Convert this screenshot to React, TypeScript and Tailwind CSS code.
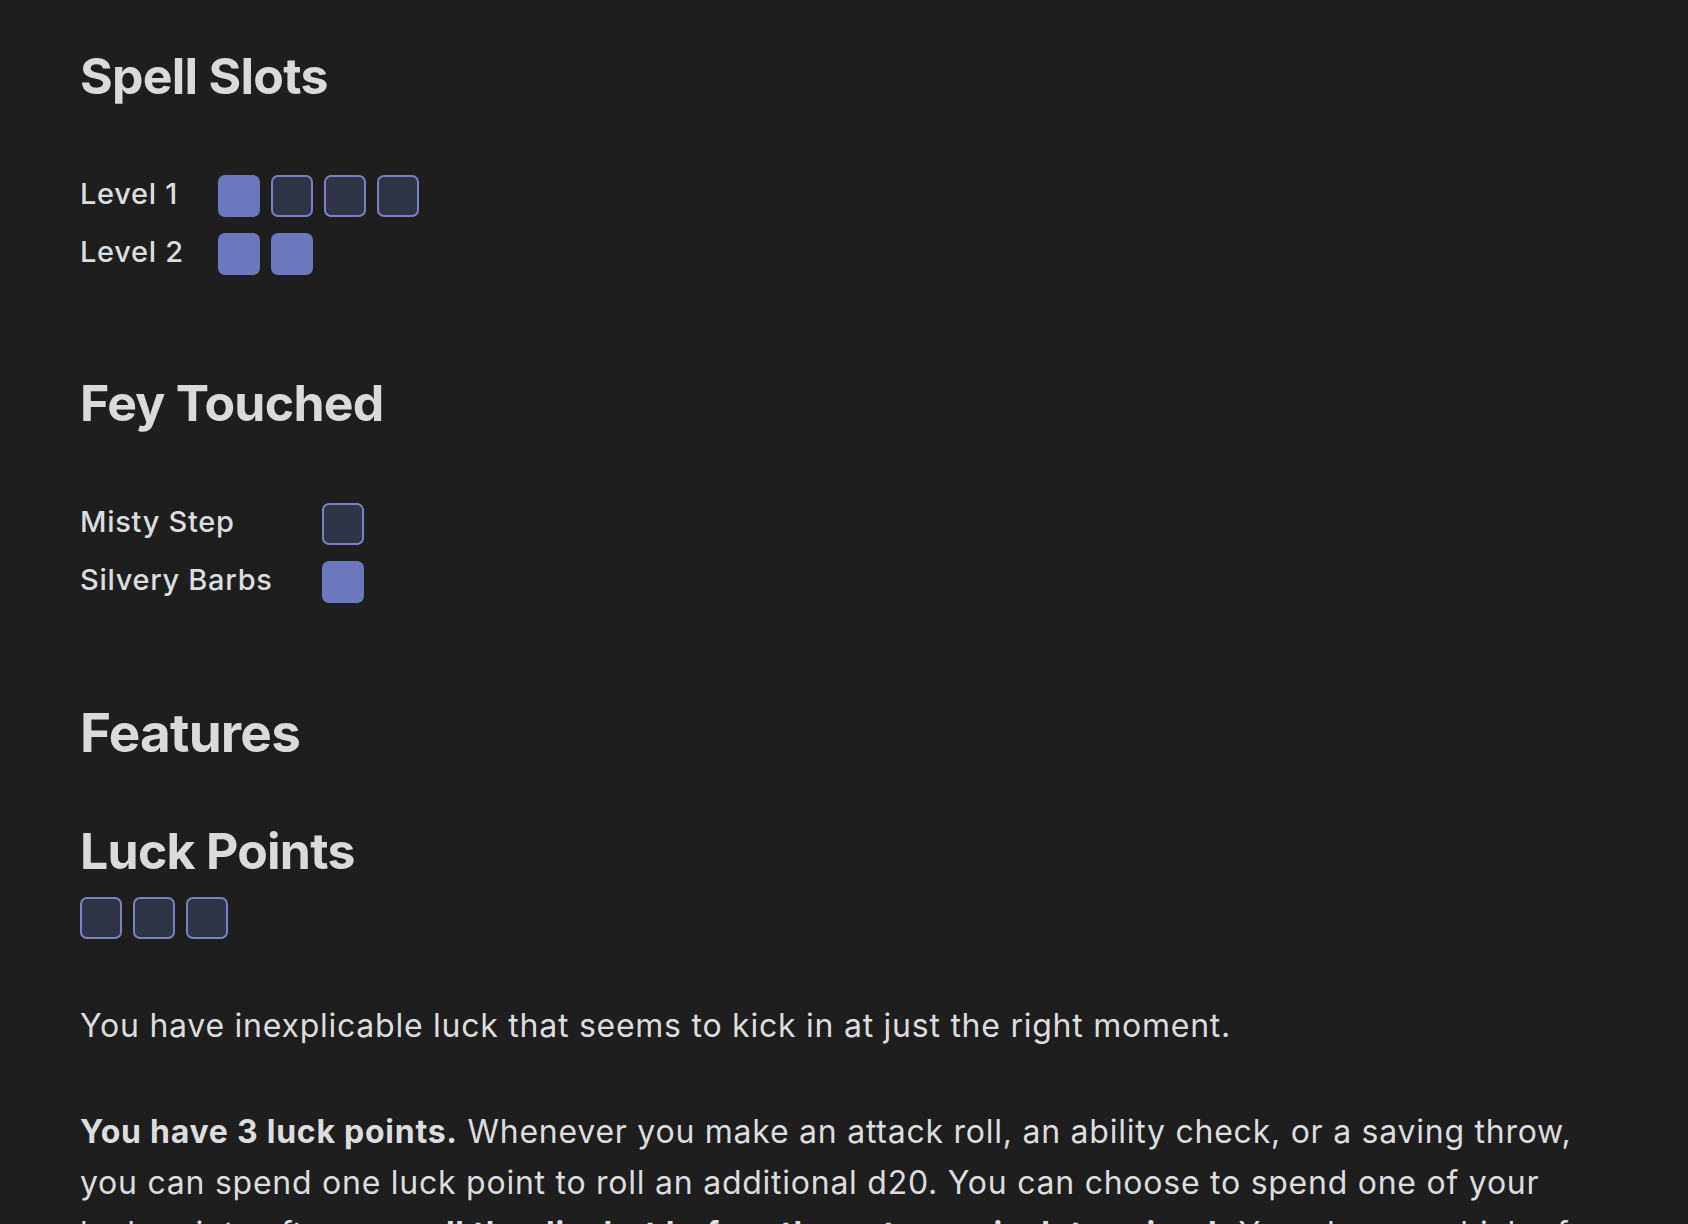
import React from 'react';

const font = { fontFamily: 'Inter, "Noto Sans", sans-serif' };

function Slot({ used }: { used: boolean }) {
  return used ? (
    <span className="block w-[42px] h-[42px] rounded-[7px] bg-[#6c78bd] border-2 border-[#6c78bd]" />
  ) : (
    <span className="block w-[42px] h-[42px] rounded-[7px] bg-[#2e3445] border-2 border-[#7a81c6]" />
  );
}

function SlotRow({ label, slots, labelWidth }: { label: string; slots: boolean[]; labelWidth: string }) {
  return (
    <div className="flex items-center h-[58px]">
      <div className={`${labelWidth} text-[29px] font-medium leading-[35px] tracking-[0.7px] -mt-[6px] text-[#dcddde]`}>
        {label}
      </div>
      <div className="flex gap-[11px]">
        {slots.map((used, i) => (
          <Slot key={i} used={used} />
        ))}
      </div>
    </div>
  );
}

export default function App() {
  return (
    <div className="h-[1224px] overflow-hidden bg-[#1e1e1e] text-[#dcddde] px-[80px] pt-[46px]" style={font}>
      <h2 className="text-[50px] leading-[61px] font-bold tracking-[-0.015em] text-[#dadada]">Spell Slots</h2>
      <div className="mt-[60px]">
        <SlotRow label="Level 1" slots={[true, false, false, false]} labelWidth="w-[138px]" />
        <SlotRow label="Level 2" slots={[true, true]} labelWidth="w-[138px]" />
      </div>

      <h2 className="mt-[90px] text-[50px] leading-[61px] font-bold tracking-[-0.015em] text-[#dadada]">Fey Touched</h2>
      <div className="mt-[61px]">
        <SlotRow label="Misty Step" slots={[false]} labelWidth="w-[242px]" />
        <SlotRow label="Silvery Barbs" slots={[true]} labelWidth="w-[242px]" />
      </div>

      <h1 className="mt-[90px] text-[53px] leading-[65px] font-bold tracking-[-0.015em] text-[#dadada]">Features</h1>

      <h2 className="mt-[55px] text-[50px] leading-[61px] font-bold tracking-[-0.015em] text-[#dadada]">Luck Points</h2>
      <div className="mt-[15px] flex gap-[11px]">
        <Slot used={false} />
        <Slot used={false} />
        <Slot used={false} />
      </div>

      <div className="max-w-[1500px] text-[32px] leading-[51px] tracking-[0.75px] text-[#dcddde]">
        <p className="mt-[61px]">You have inexplicable luck that seems to kick in at just the right moment.</p>
        <p className="mt-[55px]">
          <strong className="font-bold">You have 3 luck points.</strong> Whenever you make an attack roll, an ability
          check, or a saving throw, you can spend one luck point to roll an additional d20. You can choose to spend one
          of your luck points after you{' '}
          <strong className="font-bold">roll the die, but before the outcome is determined.</strong> You choose which of
          the d20s is used for the attack roll, ability check, or saving throw.
        </p>
      </div>
    </div>
  );
}
